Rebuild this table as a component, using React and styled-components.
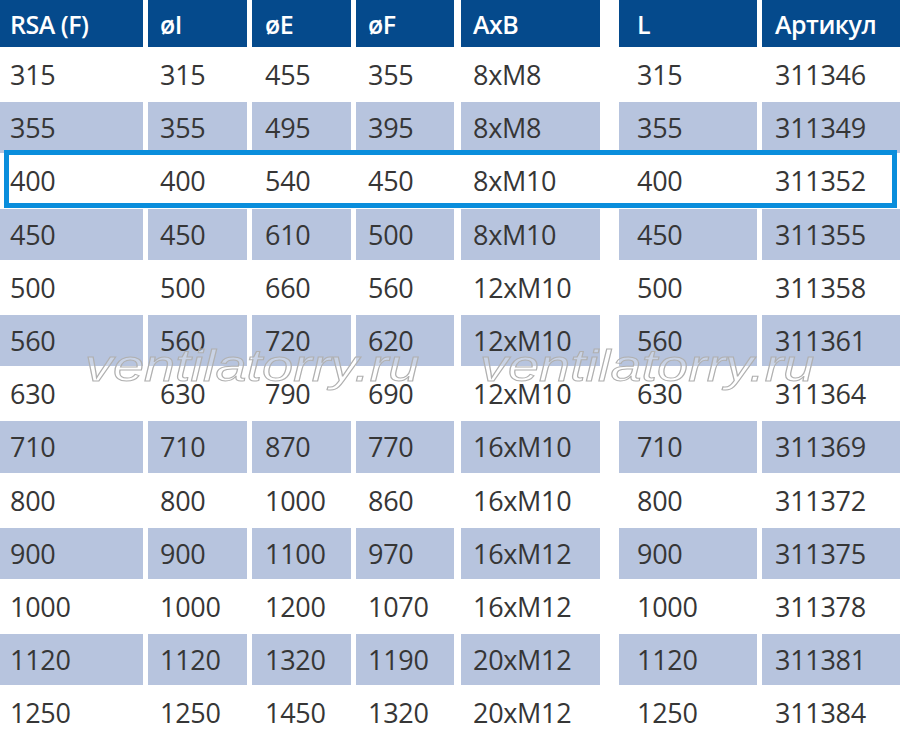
import styled, { createGlobalStyle } from 'styled-components';

const GlobalStyle = createGlobalStyle`
  html, body {
    margin: 0;
    padding: 0;
    background: #ffffff;
  }
  body {
    font-family: "Open Sans", "Noto Sans", sans-serif;
  }
`;

const columns = [
  { title: 'RSA (F)', w: 143, ml: 0, pad: 10 },
  { title: 'øI', w: 99, ml: 5, pad: 12 },
  { title: 'øE', w: 99, ml: 5, pad: 13 },
  { title: 'øF', w: 98, ml: 5, pad: 12 },
  { title: 'AxB', w: 139, ml: 7, pad: 12 },
  { title: 'L', w: 138, ml: 19, pad: 18 },
  { title: 'Артикул', w: 138, ml: 5, pad: 13 },
];

const rows = [
  ['315', '315', '455', '355', '8xM8', '315', '311346'],
  ['355', '355', '495', '395', '8xM8', '355', '311349'],
  ['400', '400', '540', '450', '8xM10', '400', '311352'],
  ['450', '450', '610', '500', '8xM10', '450', '311355'],
  ['500', '500', '660', '560', '12xM10', '500', '311358'],
  ['560', '560', '720', '620', '12xM10', '560', '311361'],
  ['630', '630', '790', '690', '12xM10', '630', '311364'],
  ['710', '710', '870', '770', '16xM10', '710', '311369'],
  ['800', '800', '1000', '860', '16xM10', '800', '311372'],
  ['900', '900', '1100', '970', '16xM12', '900', '311375'],
  ['1000', '1000', '1200', '1070', '16xM12', '1000', '311378'],
  ['1120', '1120', '1320', '1190', '20xM12', '1120', '311381'],
  ['1250', '1250', '1450', '1320', '20xM12', '1250', '311384'],
];

const Table = styled.div`
  position: relative;
  width: 900px;
  height: 743px;
  overflow: hidden;
  display: flex;
  flex-direction: column;
  gap: 2px;
`;

const Row = styled.div`
  position: relative;
  display: flex;
  height: ${props => (props.$head ? '47px' : '51.2px')};
  flex-shrink: 0;

  ${props => props.$selected && `
    &::after {
      content: '';
      position: absolute;
      left: 4px;
      right: 3px;
      top: -5px;
      bottom: -1.5px;
      border: 5px solid #0a8edc;
      pointer-events: none;
    }
  `}
`;

const Cell = styled.div`
  box-sizing: border-box;
  flex-shrink: 0;
  display: flex;
  align-items: center;
  width: ${props => props.$w}px;
  margin-left: ${props => props.$ml}px;
  padding-left: ${props => props.$pad}px;
  background: ${props => (props.$striped ? '#b7c4de' : '#ffffff')};
  color: #363636;
  font-size: 27px;
  font-weight: 400;
  letter-spacing: -0.3px;
  white-space: nowrap;
`;

const HeadCell = styled(Cell)`
  background: #054a8c;
  color: #ffffff;
  font-size: 25px;
  font-weight: 600;
  letter-spacing: -0.5px;
`;

const Watermarks = styled.div`
  position: absolute;
  top: 340px;
  left: 85px;
  display: flex;
  gap: 55px;
  pointer-events: none;
`;

const Mark = styled.span`
  display: inline-block;
  width: 340px;
  font-family: "Liberation Sans", Arial, sans-serif;
  font-style: italic;
  font-size: 44px;
  line-height: 52px;
  color: rgba(255, 255, 255, 0.25);
  -webkit-text-stroke: 1px #b0b0b0;
  transform: scaleX(1.27);
  transform-origin: left center;
  white-space: nowrap;
`;

export default function App() {
  return (
    <>
      <GlobalStyle />
      <Table>
        <Row $head>
          {columns.map(col => (
            <HeadCell key={col.title} $w={col.w} $ml={col.ml} $pad={col.pad}>
              {col.title}
            </HeadCell>
          ))}
        </Row>
        {rows.map((row, i) => (
          <Row key={row[6]} $selected={i === 2}>
            {row.map((value, j) => (
              <Cell
                key={j}
                $w={columns[j].w}
                $ml={columns[j].ml}
                $pad={columns[j].pad}
                $striped={i % 2 === 1}
              >
                {value}
              </Cell>
            ))}
          </Row>
        ))}
        <Watermarks>
          <Mark>ventilatorry.ru</Mark>
          <Mark>ventilatorry.ru</Mark>
        </Watermarks>
      </Table>
    </>
  );
}
